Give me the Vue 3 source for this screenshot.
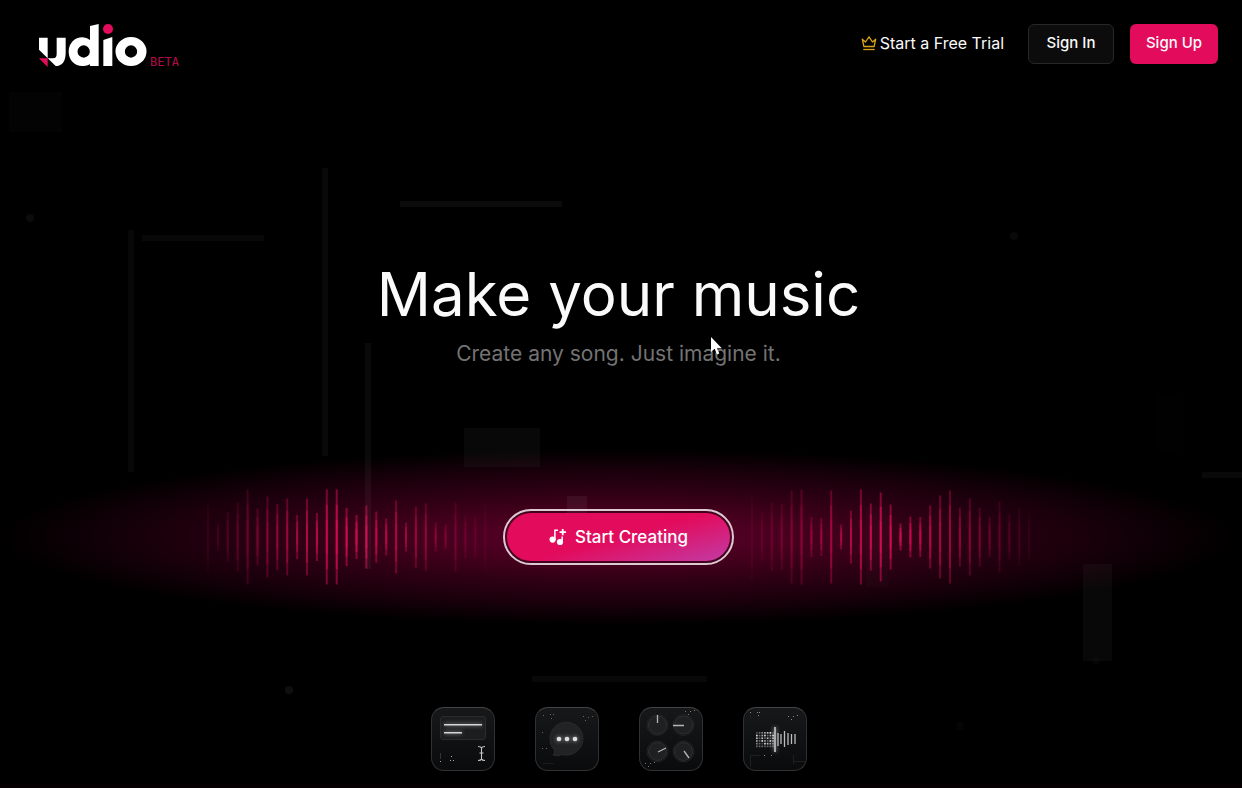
<script setup>
const leftHeights = [68, 28, 50, 68, 95, 57, 81, 66, 77, 44, 77, 48, 95, 95, 58, 44, 63, 51, 37, 73, 29, 61, 67, 29, 25, 69, 43, 43, 67]
const rightHeights = [87, 48, 68, 66, 93, 95, 40, 38, 93, 25, 53, 95, 67, 89, 65, 27, 41, 40, 63, 83, 93, 59, 77, 59, 40, 71, 45, 57, 47]

const toBars = (heights, start) =>
  heights.map((h, i) => ({
    x: start + i * 9.9,
    h,
    fade: Math.max(0.12, Math.min(1, 1.08 - Math.abs(i - 14) / 14.5)),
  }))
const waves = [toBars(leftHeights, 0), toBars(rightHeights, 1)]

const pixels = []
for (let r = 0; r < 6; r++) {
  for (let c = 0; c < 7; c++) {
    pixels.push({ x: 13 + c * 2.7, y: 25 + r * 2.7, o: 0.25 + ((r * 5 + c * 7 + r * c) % 6) * 0.12 })
  }
}
</script>

<template>
  <div class="page">
    <svg class="backdrop" aria-hidden="true">
      <g fill="#fff">
        <rect x="9" y="92" width="53" height="40" opacity=".01" />
        <circle cx="30" cy="218" r="4" opacity=".045" />
        <rect x="128" y="230" width="6" height="242" opacity=".03" />
        <rect x="142" y="235" width="122" height="6" opacity=".03" />
        <rect x="322" y="168" width="6" height="288" opacity=".035" />
        <rect x="400" y="201" width="162" height="6" opacity=".045" />
        <rect x="365" y="343" width="6" height="226" opacity=".04" />
        <rect x="464" y="428" width="76" height="39" opacity=".03" />
        <rect x="567" y="496" width="20" height="32" opacity=".05" />
        <circle cx="1014" cy="236" r="4" opacity=".035" />
        <rect x="1202" y="472" width="40" height="6" opacity=".035" />
        <rect x="1156" y="394" width="27" height="56" opacity=".005" />
        <rect x="866" y="507" width="22" height="80" opacity=".012" />
        <rect x="1083" y="564" width="29" height="97" opacity=".03" />
        <circle cx="1096" cy="661" r="4" opacity=".02" />
        <rect x="532" y="676" width="175" height="6" opacity=".03" />
        <circle cx="289" cy="690" r="4" opacity=".06" />
        <circle cx="960" cy="726" r="4" opacity=".02" />
      </g>
    </svg>

    <header class="header">
      <a class="brand" href="#" aria-label="Udio beta">
        <svg width="109" height="44" viewBox="54 42 327 132" fill="#fff" aria-hidden="true">
          <path d="M57 83h26v62L57 119z" />
          <path d="M110 83h27v45c0 28-12 40-30 40L83 145h15c9 0 12-5 12-14z" />
          <path d="M57 145h26v26z" fill="#e30b5c" />
          <path fill-rule="evenodd" d="M210 48l26-6v126h-26v-5a39 42 0 0 1-23 5c-23 0-41-18-41-43s18-43 41-43a36 36 0 0 1 23 8zM191 106a18 18 0 1 0 0 37a18 18 0 1 0 0-37z" />
          <path d="M250 90l27-9v87h-27z" />
          <circle cx="264" cy="57" r="15" fill="#e30b5c" />
          <path fill-rule="evenodd" d="M333 81a46 43 0 1 0 0 87a46 43 0 1 0 0-87zm0 25a18 18 0 1 1 0 37a18 18 0 1 1 0-37z" />
        </svg>
        <span class="beta">BETA</span>
      </a>
      <nav class="nav">
        <a class="trial" href="#">
          <svg width="16" height="16" viewBox="0 0 16 16" fill="none" stroke="#dba318" stroke-width="1.3" stroke-linejoin="round" aria-hidden="true">
            <path d="M1.3 4.2l3.200 2.800L8 1.800l3.500 5.200 3.200-2.800-1.600 7.300H2.900z" />
            <path d="M2.300 14.500h11.400" />
          </svg>
          Start a Free Trial
        </a>
        <button class="btn outline" type="button">Sign In</button>
        <button class="btn solid" type="button">Sign Up</button>
      </nav>
    </header>

    <main class="hero">
      <h1>Make your music</h1>
      <p class="tagline">Create any song. Just imagine it.</p>

      <section class="stage">
        <svg class="wave" width="280" height="96" viewBox="0 0 280 96" aria-hidden="true">
          <g v-for="(b, i) in waves[0]" :key="i" fill="#e30b5c" :opacity="b.fade">
            <rect :x="b.x" :y="48 - b.h / 2" width="2" :height="b.h" opacity=".5" />
            <rect :x="b.x" :y="48 - b.h * .34" width="2" :height="b.h * .68" opacity=".5" />
            <rect :x="b.x" :y="48 - b.h * .18" width="2" :height="b.h * .36" opacity=".5" />
          </g>
        </svg>
        <button class="create" type="button">
          <svg width="18" height="18" viewBox="0 0 18 18" fill="none" stroke="#fff" stroke-width="1.5" aria-hidden="true">
            <path d="M5.900 12V2.300h3.100M13.200 14.400V8.400" />
            <path d="M13.700 1v6.200M10.600 4.100h6.400" stroke-width="1.800" />
            <circle cx="3.600" cy="11.600" r="3.100" fill="#fff" stroke="none" />
            <circle cx="11" cy="14" r="3.100" fill="#fff" stroke="none" />
          </svg>
          <span>Start Creating</span>
        </button>
        <svg class="wave" width="280" height="96" viewBox="0 0 280 96" aria-hidden="true">
          <g v-for="(b, i) in waves[1]" :key="i" fill="#e30b5c" :opacity="b.fade">
            <rect :x="b.x" :y="48 - b.h / 2" width="2" :height="b.h" opacity=".5" />
            <rect :x="b.x" :y="48 - b.h * .34" width="2" :height="b.h * .68" opacity=".5" />
            <rect :x="b.x" :y="48 - b.h * .18" width="2" :height="b.h * .36" opacity=".5" />
          </g>
        </svg>
      </section>

      <section class="tiles">
        <button class="tile" type="button" aria-label="Write a prompt">
          <svg viewBox="1 1 62 62" aria-hidden="true">
            <rect x="9.500" y="9.500" width="45" height="23" rx="2.500" fill="#1c1d1e" stroke="#2b2c2d" />
            <g class="glow" stroke="#d6d6d6" stroke-width="1.4"><path d="M13 17.700h38M13 25.800h18" /></g>
            <path d="M47 39.500q3 0 3.500 1.500q.5-1.500 3.500-1.500M50.500 41v11M48.500 46h4M47 53.500q3 0 3.500-1.500q.5 1.500 3.500 1.500" fill="none" stroke="#c8c8c8" stroke-width="1.1" />
            <g fill="#aaa"><rect x="9" y="54" width="1" height="1" /><rect x="20" y="49" width="1" height="1" /><rect x="19" y="53" width="1" height="1" /><rect x="22" y="53" width="1" height="1" /></g>
            <path d="M9.500 46v6" stroke="#333" />
          </svg>
        </button>
        <button class="tile" type="button" aria-label="Describe a song">
          <svg viewBox="1 1 62 62" aria-hidden="true">
            <path d="M19.500 43A16.500 16.500 0 1 1 27 47.500Q22 50 18 48Q20 46 19.500 43z" fill="#222324" stroke="#292a2b" />
            <g class="glow" fill="#ddd"><circle cx="24" cy="32" r="2.300" /><circle cx="32" cy="32" r="2.300" /><circle cx="40" cy="32" r="2.300" /></g>
            <g fill="#666"><rect x="8" y="8" width="1" height="1" /><rect x="15" y="7" width="1" height="1" /><rect x="18" y="7" width="1" height="1" /><rect x="16" y="11" width="1" height="1" /><rect x="48" y="9" width="1" height="1" /><rect x="50" y="13" width="1" height="1" /><rect x="53" y="10" width="1" height="1" /><rect x="57" y="9" width="1" height="1" /><rect x="7" y="25" width="1" height="1" /><rect x="7" y="41" width="1" height="1" /><rect x="11" y="41" width="1" height="1" /></g>
            <path d="M8 56.500h11" stroke="#1a1b1c" />
          </svg>
        </button>
        <button class="tile" type="button" aria-label="Adjust the controls">
          <svg viewBox="1 1 62 62" aria-hidden="true">
            <g fill="#1f2021" stroke="#303132">
              <circle cx="18.500" cy="18" r="9" /><circle cx="44.500" cy="18" r="9" /><circle cx="18.500" cy="44.500" r="9" /><circle cx="44.500" cy="44.500" r="9" />
            </g>
            <g fill="none" stroke="#222324">
              <circle cx="18.500" cy="18" r="10.500" /><circle cx="44.500" cy="18" r="10.500" /><circle cx="18.500" cy="44.500" r="10.500" /><circle cx="44.500" cy="44.500" r="10.500" />
            </g>
            <path d="M18.500 8v8M34 18.500h11M19 45l8-4M45 44l5 7" stroke="#b5b5b5" stroke-width="1.3" />
            <g fill="#777"><rect x="46" y="4" width="1" height="1" /><rect x="49" y="7" width="1" height="1" /><rect x="51" y="4" width="1" height="1" /><rect x="55" y="3" width="1" height="1" /><rect x="6" y="56" width="1" height="1" /><rect x="9" y="59" width="1" height="1" /><rect x="11" y="56" width="1" height="1" /><rect x="15" y="55" width="1" height="1" /></g>
          </svg>
        </button>
        <button class="tile" type="button" aria-label="Remix audio">
          <svg viewBox="1 1 62 62" aria-hidden="true">
            <rect v-for="(p, i) in pixels" :key="i" :x="p.x" :y="p.y" width="1.700" height="1.700" fill="#fff" :opacity="p.o" />
            <path class="glow" d="M32 20v25" stroke="#aaa" stroke-width="2" />
            <g stroke="#bcbcbc" stroke-width="1.300"><path d="M35 26v13M38 27v10M41.500 24v16M45 26v12M48.500 27v10M52 27v10" /></g>
            <path d="M7.500 7v5M7.500 60V48.500h10M50.500 48v9M50.500 54.500h12" fill="none" stroke="#1e1f20" />
            <g fill="#888"><rect x="7" y="5" width="1" height="1" /><rect x="14" y="5" width="1" height="1" /><rect x="16" y="5" width="1" height="1" /><rect x="15" y="8" width="1" height="1" /><rect x="45" y="9" width="1" height="1" /><rect x="48" y="12" width="1" height="1" /><rect x="50" y="9" width="1" height="1" /><rect x="54" y="8" width="1" height="1" /><rect x="21" y="48" width="1" height="1" /><rect x="28" y="48" width="1" height="1" /></g>
          </svg>
        </button>
      </section>
    </main>

    <svg class="cursor" width="14" height="20" viewBox="0 0 14 20" aria-hidden="true">
      <path d="M1 1v15l3.700-3.200L7 18.500l2.300-1-2.300-5.200h4.800z" fill="#fff" />
    </svg>
  </div>
</template>

<style>
html, body { background: #000; }
</style>

<style scoped>
.page {
  position: relative;
  display: flex;
  flex-direction: column;
  box-sizing: border-box;
  min-height: 100vh;
  overflow: hidden;
  background: #000;
  border-bottom: 4px solid #060003;
  color: #fafafa;
  font-family: Inter, "Liberation Sans", sans-serif;
}
.backdrop {
  position: absolute;
  inset: 0;
  width: 100%;
  height: 100%;
  z-index: 1;
  pointer-events: none;
}
.header {
  display: flex;
  justify-content: space-between;
  align-items: flex-start;
  height: 64px;
  padding: 24px 24px 0 38px;
}
.brand {
  display: flex;
  align-items: flex-end;
  gap: 3px;
  text-decoration: none;
}
.beta {
  font: 12px/12px "DejaVu Sans Mono", monospace;
  color: #b00c4a;
}
.nav {
  display: flex;
  align-items: center;
  gap: 16px;
}
.trial {
  display: flex;
  align-items: center;
  gap: 3px;
  height: 40px;
  padding-bottom: 2px;
  box-sizing: border-box;
  margin-right: 8px;
  color: #fafafa;
  font-size: 16px;
  text-decoration: none;
}
.btn {
  height: 40px;
  padding: 0 0 2px;
  border-radius: 6px;
  color: #fafafa;
  font: 500 15px/20px Inter, "Liberation Sans", sans-serif;
}
.outline {
  width: 86px;
  border: 1px solid #272727;
  background: #0c0c0c;
}
.solid {
  width: 88px;
  border: 0;
  background: #e30b5c;
}
.hero {
  display: flex;
  flex-direction: column;
  align-items: center;
  padding: 176px 5px 0 0;
}
h1 {
  margin: 0;
  font-size: 60px;
  line-height: 60px;
  font-weight: 400;
}
.tagline {
  margin: 16px 0 0;
  color: #737373;
  font-size: 21px;
  line-height: 28px;
}
.stage {
  display: flex;
  align-items: center;
  justify-content: center;
  gap: 16px;
  width: 100%;
  height: 176px;
  margin-top: 81px;
  background: radial-gradient(ellipse 50% 50% at center, #62002b 0%, #4a0020 25%, #300014 50%, #1a000b 75%, #000 100%);
}
.wave { flex: none; }
.create {
  position: relative;
  z-index: 2;
  display: flex;
  align-items: center;
  justify-content: center;
  gap: 8px;
  flex: none;
  width: 223px;
  height: 48px;
  margin: 0 4px;
  padding: 0;
  border: 0;
  border-radius: 24px;
  outline: 2px solid #ddc9d1;
  outline-offset: 2px;
  background: linear-gradient(165deg, #e30b5c 50%, #c23ba5 100%);
  color: #fff;
  font: 500 17px/24px Inter, "Liberation Sans", sans-serif;
}
.tiles {
  display: flex;
  gap: 40px;
  margin-top: 82px;
}
.tile {
  box-sizing: border-box;
  width: 64px;
  height: 64px;
  padding: 0;
  border: 1px solid #303132;
  border-top-color: #434445;
  border-radius: 13px;
  background: linear-gradient(#16181a, #090b0c);
}
.tile svg { display: block; width: 100%; height: 100%; }
.glow { filter: drop-shadow(0 0 2px rgba(255, 255, 255, .6)); }
.cursor {
  position: absolute;
  left: 710px;
  top: 336px;
  z-index: 3;
}
</style>
